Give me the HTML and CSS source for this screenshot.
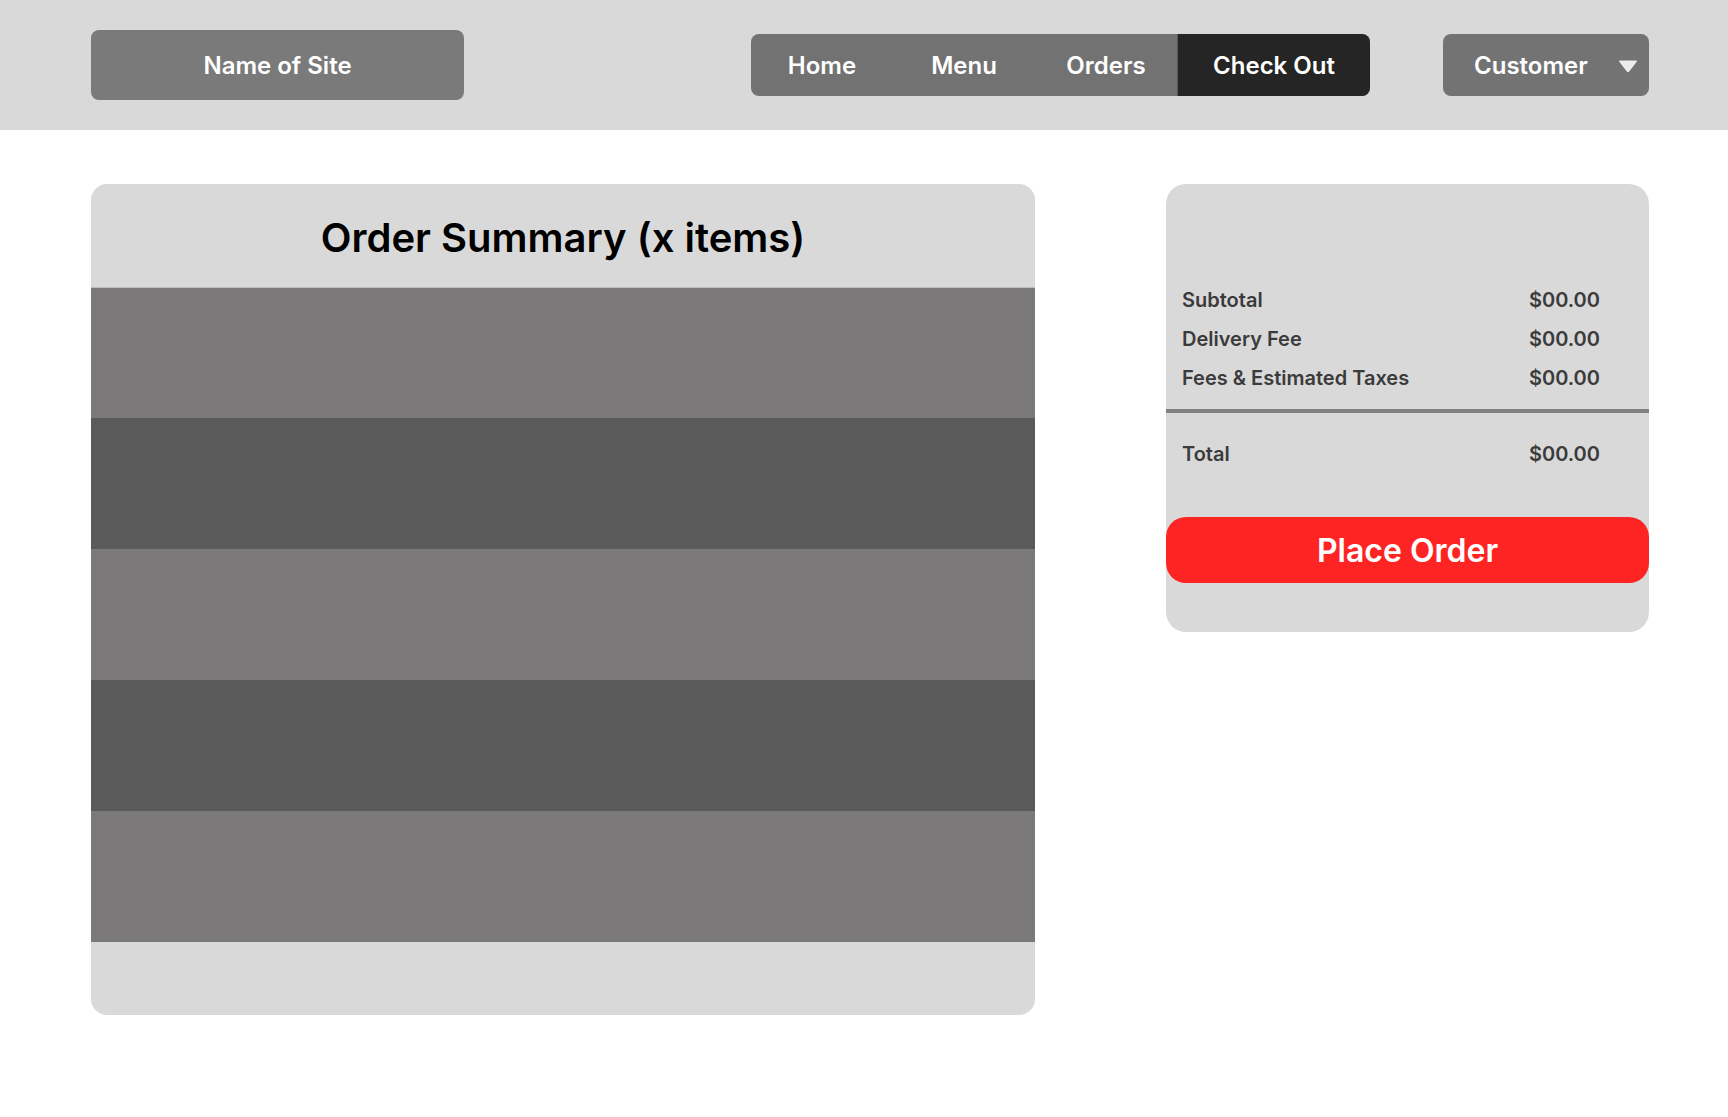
FILE: index.html
```html
<!DOCTYPE html>
<html lang="en">
<head>
<meta charset="utf-8">
<title>Check Out</title>
<link rel="stylesheet" href="styles.css">
</head>
<body>
<header class="topbar">
  <div class="site-name">Name of Site</div>
  <nav class="nav">
    <div class="nav-main">
      <a class="nav-item">Home</a>
      <a class="nav-item">Menu</a>
      <a class="nav-item">Orders</a>
    </div>
    <a class="nav-item nav-active">Check Out</a>
  </nav>
  <div class="customer">
    <span class="customer-label">Customer</span>
    <svg class="caret" width="20" height="14" viewBox="0 0 20 14"><path d="M2 1.5 H18 Q19.5 1.5 18.7 2.8 L11.2 12.6 Q10 14 8.8 12.6 L1.3 2.8 Q0.5 1.5 2 1.5 Z" fill="#ececec"/></svg>
  </div>
</header>
<main class="content">
  <section class="order-card">
    <h1 class="order-title">Order Summary (x items)</h1>
    <div class="items">
      <div class="item item-light"></div>
      <div class="item item-dark"></div>
      <div class="item item-light"></div>
      <div class="item item-dark"></div>
      <div class="item item-light"></div>
    </div>
  </section>
  <aside class="summary-card">
    <div class="lines">
      <div class="line"><span>Subtotal</span><span>$00.00</span></div>
      <div class="line"><span>Delivery Fee</span><span>$00.00</span></div>
      <div class="line"><span>Fees &amp; Estimated Taxes</span><span>$00.00</span></div>
    </div>
    <div class="divider"></div>
    <div class="line total"><span>Total</span><span>$00.00</span></div>
    <button class="place-order">Place Order</button>
  </aside>
</main>
</body>
</html>
```
FILE: styles.css
```css
* { box-sizing: border-box; }
body {
  margin: 0;
  background: #ffffff;
  font-family: Inter, "Noto Sans", sans-serif;
}
.topbar {
  height: 130px;
  background: #d9d9d9;
  display: flex;
  align-items: center;
  padding: 0 79px 0 91px;
}
.site-name {
  width: 373px;
  height: 70px;
  background: #7a7a7a;
  border-radius: 8px;
  color: #fff;
  font-size: 24px;
  font-weight: 600;
  display: flex;
  align-items: center;
  justify-content: center;
}
.nav {
  margin-left: auto;
  display: flex;
  height: 62px;
  border-radius: 8px;
  overflow: hidden;
  background: #727272;
}
.nav-main {
  display: flex;
  width: 427px;
  border-right: 1px solid #5a5a5a;
}
.nav-item {
  flex: 1;
  display: flex;
  align-items: center;
  justify-content: center;
  color: #fff;
  font-size: 24px;
  font-weight: 600;
  text-decoration: none;
}
.nav-active {
  flex: none;
  width: 192px;
  background: #252525;
}
.customer {
  margin-left: 73px;
  width: 206px;
  height: 62px;
  background: #737373;
  border-radius: 8px;
  display: flex;
  align-items: center;
  padding: 0 11px 0 31px;
  color: #fff;
  font-size: 24px;
  font-weight: 600;
}
.customer-label { flex: 1; }
.caret { display: block; margin-top: 2px; }
.content {
  display: flex;
  align-items: flex-start;
  gap: 131px;
  padding: 54px 0 0 91px;
}
.order-card {
  width: 944px;
  background: #d9d9d9;
  border-radius: 16px;
  overflow: hidden;
  padding-bottom: 73px;
}
.order-title {
  margin: 0;
  height: 103px;
  padding-top: 5px;
  line-height: 98px;
  text-align: center;
  font-size: 40px;
  font-weight: 600;
  color: #000;
}
.items { border-top: 1px solid #bdbdbd; }
.item { height: 131px; }
.item-light { background: #7b7979; }
.item-dark { background: #5a5a5a; }
.item-light:first-child { height: 130px; }
.summary-card {
  width: 483px;
  background: #d9d9d9;
  border-radius: 20px;
  padding: 97px 0 49px;
}
.line {
  display: flex;
  justify-content: space-between;
  padding: 0 49px 0 16px;
  height: 39px;
  line-height: 39px;
  font-size: 20px;
  font-weight: 600;
  color: #3b3b3b;
}
.divider {
  margin-top: 11px;
  height: 4px;
  background: #808080;
}
.total { margin-top: 22px; }
.place-order {
  display: block;
  margin-top: 43px;
  width: 100%;
  height: 66px;
  border: none;
  border-radius: 20px;
  background: #ff2424;
  color: #fff;
  font-family: Inter, "Noto Sans", sans-serif;
  font-size: 32px;
  font-weight: 600;
  padding: 0;
}
```
